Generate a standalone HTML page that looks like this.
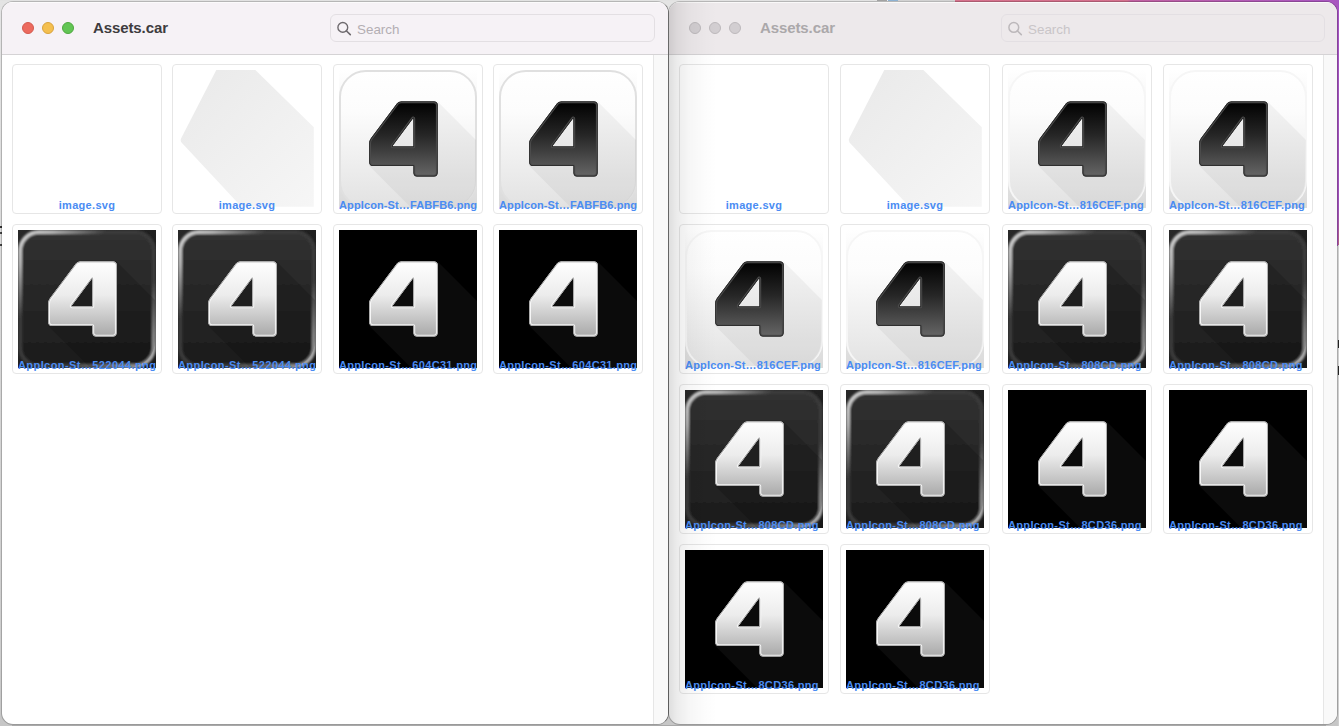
<!DOCTYPE html>
<html><head><meta charset="utf-8">
<style>
*{box-sizing:border-box;margin:0;padding:0}
html,body{width:1339px;height:726px;overflow:hidden;background:linear-gradient(180deg,#e4e4e4 0,#d8d8d8 40%,#cdcdcd 90%,#c6c6c6 100%);font-family:"Liberation Sans",sans-serif}
#topstrip{position:absolute;left:0;top:0;width:1339px;height:1px;background:#e2e2e2}
#bits{position:absolute;left:877px;top:0;width:78px;height:1px;background:linear-gradient(90deg,#a2a2a2 0,#a2a2a2 10px,#eee 10px,#eee 11px,#8db1d2 11px,#8db1d2 21px,#d2d2d2 21px)}
#pink{position:absolute;left:955px;top:0;width:384px;height:246px;background:linear-gradient(90deg,#d6728c 0,#d4708e 172px,#c262a2 176px,#b45cb4 280px,#a856c0 100%)}
#purp{position:absolute;left:1338px;top:0;width:1px;height:245px;background:linear-gradient(180deg,#a454c4,#9c50b8 85%,#b06080)}
.win{position:absolute;top:1px;height:724px;border:1px solid rgba(0,0,0,.2);border-radius:12px;overflow:hidden;background:#fff;background-clip:padding-box}
#w1{left:1px;width:668px;z-index:2;border-right-color:rgba(0,0,0,.42);border-bottom-color:rgba(0,0,0,.22)}
#w2{left:668px;width:670px;z-index:1;border-bottom-color:rgba(0,0,0,.22)}
.shade{position:absolute;left:0;top:0;bottom:0;width:48px;z-index:5;background:linear-gradient(90deg,rgba(0,0,0,.13) 0,rgba(0,0,0,.075) 8px,rgba(0,0,0,.035) 20px,rgba(0,0,0,.01) 36px,rgba(0,0,0,0) 48px)}
.tb{position:absolute;left:0;top:0;right:0;height:53px;border-bottom:1px solid #d5d3d5;box-shadow:inset 0 1px 0 rgba(255,255,255,.7)}
#w1 .tb{background:#f6f2f6}
#w2 .tb{background:#ede9eb}
.light{position:absolute;top:20px;width:12px;height:12px;border-radius:50%}
.title{position:absolute;top:17px;font-weight:bold;font-size:15px;color:#3e3c3e;letter-spacing:-0.1px}
#w2 .title{color:#aba8aa}
.search{position:absolute;top:12px;height:28px;border:1px solid #e3dfe3;border-radius:6px}
.search .ph{position:absolute;left:26px;top:7px;font-size:13.4px;color:#b3aeb3}
.search svg{position:absolute;left:5px;top:5px}
.strip{position:absolute;top:53px;bottom:0;width:15px;background:#f9f9f9;border-left:1px solid #e6e6e6}
.cell{position:absolute;width:150px;height:150px;border:1px solid #e6e6e6;border-radius:4px;background:#fff}
.cell svg{position:absolute;left:5px;top:5px;width:138px;height:138px}
.lbl{position:absolute;left:-20px;right:-20px;top:134px;text-align:center;font-weight:bold;font-size:11px;color:#4a8cf3;white-space:nowrap}
.lbl.a{left:5px;right:auto;text-align:left}
</style></head><body>
<div id="topstrip"></div><div style="position:absolute;left:12px;top:725px;width:1314px;height:1px;background:#a9a9a9"></div><div id="bits"></div><div id="pink"></div><div id="purp"></div>
<div style="position:absolute;left:1338px;top:245px;width:1px;height:481px;background:#cfcfcf"></div>
<div style="position:absolute;left:1338px;top:340px;width:1px;height:8px;background:#222"></div><div style="position:absolute;left:1338px;top:366px;width:1px;height:9px;background:#222"></div>
<div style="position:absolute;left:0;top:226px;width:2px;height:2px;background:#333"></div><div style="position:absolute;left:0;top:232px;width:2px;height:2px;background:#444"></div><div style="position:absolute;left:0;top:244px;width:2px;height:2px;background:#444"></div>
<svg width="0" height="0" style="position:absolute">
<defs>
<linearGradient id="gBlack4" x1="0" y1="0" x2="0" y2="1"><stop offset="0" stop-color="#000"/><stop offset=".45" stop-color="#262626"/><stop offset="1" stop-color="#666"/></linearGradient>
<linearGradient id="gWhite4" x1="0" y1="0" x2="0" y2="1"><stop offset="0" stop-color="#fff"/><stop offset=".45" stop-color="#ececec"/><stop offset="1" stop-color="#a8a8a8"/></linearGradient>
<linearGradient id="gWbg" x1="0" y1="0" x2="0" y2="1"><stop offset="0" stop-color="#ffffff"/><stop offset="1" stop-color="#dadada"/></linearGradient>
<linearGradient id="gWin" x1="0" y1="0" x2="0" y2="1"><stop offset="0" stop-color="#ffffff"/><stop offset=".3" stop-color="#fcfcfc"/><stop offset="1" stop-color="#e2e2e2"/></linearGradient>
<linearGradient id="gDbg" x1="0" y1="0" x2="1" y2="1"><stop offset="0" stop-color="#282828"/><stop offset="1" stop-color="#181818"/></linearGradient>
<linearGradient id="gDin" x1="0" y1="0" x2="0" y2="1"><stop offset="0" stop-color="#313131"/><stop offset="1" stop-color="#1c1c1c"/></linearGradient>
<linearGradient id="gRim" x1="0" y1="0" x2="1" y2="1"><stop offset="0" stop-color="#d4d4d4"/><stop offset=".12" stop-color="#b4b4b4"/><stop offset=".32" stop-color="#3a3a3a"/><stop offset=".68" stop-color="#3a3a3a"/><stop offset=".88" stop-color="#9a9a9a"/><stop offset="1" stop-color="#b0b0b0"/></linearGradient>
<linearGradient id="gHex" x1="0" y1="0" x2="1" y2="1"><stop offset="0" stop-color="#e9e9e9"/><stop offset="1" stop-color="#f6f6f6"/></linearGradient>
<filter id="soft" x="-5%" y="-5%" width="110%" height="110%"><feGaussianBlur stdDeviation=".85"/></filter>
<path id="four" d="M62.3,31.5 L95,31.5 Q98.6,31.5 98.6,35.1 L98.6,102.8 Q98.6,106.4 95,106.4 L78.1,106.4 Q74.5,106.4 74.5,102.8 L74.5,95.9 L34,95.9 Q30.3,95.9 30.3,92.3 L30.3,73.3 Q30.3,70.6 32,68.3 L58,33.5 Q59.7,31.5 62.3,31.5 Z M74.5,49 Q74.5,47.6 73.7,48.7 L53.8,75.4 Q53,76.6 54.4,76.6 L74.5,76.6 Z" fill-rule="evenodd"/>
<clipPath id="c4"><use href="#four" clip-rule="evenodd"/></clipPath>
<path id="shadow" d="M59,31.5 L98.6,31.5 L138,70.9 L138,138 L72.4,138 L30.3,95.9 L30.3,70.5 Z"/>
<clipPath id="rr"><rect x="1" y="1" width="136" height="136" rx="26"/></clipPath>
<g id="blk4">
<use href="#four" fill="url(#gBlack4)"/>
<g clip-path="url(#c4)"><use href="#four" fill="none" stroke="#4e4e4e" stroke-width="3.4" stroke-linejoin="round"/><use href="#four" fill="none" stroke="#262626" stroke-width="1.5" stroke-linejoin="round"/></g>
</g>
<g id="wht4">
<use href="#four" fill="url(#gWhite4)"/>
<g clip-path="url(#c4)"><use href="#four" fill="none" stroke="#fbfbfb" stroke-width="3.4" opacity=".9" stroke-linejoin="round"/><use href="#four" fill="none" stroke="#9a9a9a" stroke-width="1.3" stroke-linejoin="round"/></g>
</g>
<symbol id="iconW" viewBox="0 0 138 138">
<rect width="138" height="138" fill="url(#gWbg)"/>
<rect x="1" y="1" width="136" height="136" rx="26" fill="url(#gWin)" stroke="#e0e0e0" stroke-width="2"/>
<g clip-path="url(#rr)"><use href="#shadow" fill="#000" opacity=".045"/></g>
<use href="#blk4"/>
</symbol>
<symbol id="iconW2" viewBox="0 0 138 138">
<rect width="138" height="138" fill="url(#gWbg)"/>
<rect x="1" y="1" width="136" height="136" rx="26" fill="url(#gWin)" stroke="#f6f6f6" stroke-width="2"/>
<g clip-path="url(#rr)"><use href="#shadow" fill="#000" opacity=".045"/></g>
<use href="#blk4"/>
</symbol>
<symbol id="iconD" viewBox="0 0 138 138">
<rect width="138" height="138" fill="url(#gDbg)"/>
<rect x="2" y="2" width="134" height="134" rx="19" fill="url(#gDin)" stroke="url(#gRim)" stroke-width="4" filter="url(#soft)"/>
<g clip-path="url(#rr)"><use href="#shadow" fill="#000" opacity=".16"/></g>
<use href="#wht4"/>
</symbol>
<symbol id="iconB" viewBox="0 0 138 138">
<rect width="138" height="138" fill="#000"/>
<use href="#shadow" fill="#0b0b0b"/>
<use href="#wht4"/>
</symbol>
<symbol id="iconHex" viewBox="0 0 138 138">
<path d="M38.3,0 L77.4,0 L135.8,57.3 L135.8,136.8 L63.4,136.8 L3.5,72.5 Q2,70.4 3.3,68 Z" fill="url(#gHex)"/>
</symbol>
</defs>
</svg>

<div class="win" id="w1">
 <div class="tb">
  <div class="light" style="left:20px;background:#ec6a5e;border:1px solid #d45a4f"></div>
  <div class="light" style="left:40px;background:#f4bf4f;border:1px solid #d9a33d"></div>
  <div class="light" style="left:60px;background:#62c554;border:1px solid #4fa83f"></div>
  <div class="title" style="left:91px">Assets.car</div>
  <div class="search" style="left:328px;width:325px">
   <svg width="16" height="16" viewBox="0 0 16 16"><circle cx="6.8" cy="7.4" r="4.9" fill="none" stroke="#6e6a6e" stroke-width="1.4"/><path d="M10.5,11 L14.3,14.6" stroke="#6e6a6e" stroke-width="1.6" stroke-linecap="round"/></svg>
   <div class="ph">Search</div>
  </div>
 </div>
 <div class="strip" style="left:651px"></div>
 <div class="cell" style="left:10px;top:62px"><div class="lbl" style="letter-spacing:0.3px">image.svg</div></div>
 <div class="cell" style="left:170px;top:62px"><svg><use href="#iconHex"/></svg><div class="lbl" style="letter-spacing:0.3px">image.svg</div></div>
 <div class="cell" style="left:331px;top:62px"><svg><use href="#iconW"/></svg><div class="lbl a" style="letter-spacing:0.12px">AppIcon-St…FABFB6.png</div></div>
 <div class="cell" style="left:491px;top:62px"><svg><use href="#iconW"/></svg><div class="lbl a" style="letter-spacing:0.12px">AppIcon-St…FABFB6.png</div></div>
 <div class="cell" style="left:10px;top:222px"><svg><use href="#iconD"/></svg><div class="lbl a" style="letter-spacing:0.42px">AppIcon-St…522044.png</div></div>
 <div class="cell" style="left:170px;top:222px"><svg><use href="#iconD"/></svg><div class="lbl a" style="letter-spacing:0.42px">AppIcon-St…522044.png</div></div>
 <div class="cell" style="left:331px;top:222px"><svg><use href="#iconB"/></svg><div class="lbl a" style="letter-spacing:0.33px">AppIcon-St…604C31.png</div></div>
 <div class="cell" style="left:491px;top:222px"><svg><use href="#iconB"/></svg><div class="lbl a" style="letter-spacing:0.33px">AppIcon-St…604C31.png</div></div>
</div>

<div class="win" id="w2">
 <div class="shade"></div>
 <div class="tb">
  <div class="light" style="left:20px;background:#d2ced1;border:1px solid #bdb9bc"></div>
  <div class="light" style="left:40px;background:#d2ced1;border:1px solid #bdb9bc"></div>
  <div class="light" style="left:60px;background:#d2ced1;border:1px solid #bdb9bc"></div>
  <div class="title" style="left:91px">Assets.car</div>
  <div class="search" style="left:332px;width:324px">
   <svg width="16" height="16" viewBox="0 0 16 16"><circle cx="6.8" cy="7.4" r="4.9" fill="none" stroke="#bcb8bb" stroke-width="1.5"/><path d="M10.5,11 L14.3,14.6" stroke="#bcb8bb" stroke-width="1.6" stroke-linecap="round"/></svg>
   <div class="ph" style="color:#c9c5c8">Search</div>
  </div>
 </div>
 <div class="strip" style="left:654px"></div>
 <div class="cell" style="left:10px;top:62px"><div class="lbl" style="letter-spacing:0.3px">image.svg</div></div>
 <div class="cell" style="left:171px;top:62px"><svg><use href="#iconHex"/></svg><div class="lbl" style="letter-spacing:0.3px">image.svg</div></div>
 <div class="cell" style="left:333px;top:62px"><svg><use href="#iconW2"/></svg><div class="lbl a" style="letter-spacing:0.19px">AppIcon-St…816CEF.png</div></div>
 <div class="cell" style="left:494px;top:62px"><svg><use href="#iconW2"/></svg><div class="lbl a" style="letter-spacing:0.19px">AppIcon-St…816CEF.png</div></div>
 <div class="cell" style="left:10px;top:222px"><svg><use href="#iconW2"/></svg><div class="lbl a" style="letter-spacing:0.19px">AppIcon-St…816CEF.png</div></div>
 <div class="cell" style="left:171px;top:222px"><svg><use href="#iconW2"/></svg><div class="lbl a" style="letter-spacing:0.19px">AppIcon-St…816CEF.png</div></div>
 <div class="cell" style="left:333px;top:222px"><svg><use href="#iconD"/></svg><div class="lbl a" style="letter-spacing:0.34px">AppIcon-St…808CD.png</div></div>
 <div class="cell" style="left:494px;top:222px"><svg><use href="#iconD"/></svg><div class="lbl a" style="letter-spacing:0.34px">AppIcon-St…808CD.png</div></div>
 <div class="cell" style="left:10px;top:382px"><svg><use href="#iconD"/></svg><div class="lbl a" style="letter-spacing:0.34px">AppIcon-St…808CD.png</div></div>
 <div class="cell" style="left:171px;top:382px"><svg><use href="#iconD"/></svg><div class="lbl a" style="letter-spacing:0.34px">AppIcon-St…808CD.png</div></div>
 <div class="cell" style="left:333px;top:382px"><svg><use href="#iconB"/></svg><div class="lbl a" style="letter-spacing:0.34px">AppIcon-St…8CD36.png</div></div>
 <div class="cell" style="left:494px;top:382px"><svg><use href="#iconB"/></svg><div class="lbl a" style="letter-spacing:0.34px">AppIcon-St…8CD36.png</div></div>
 <div class="cell" style="left:10px;top:542px"><svg><use href="#iconB"/></svg><div class="lbl a" style="letter-spacing:0.34px">AppIcon-St…8CD36.png</div></div>
 <div class="cell" style="left:171px;top:542px"><svg><use href="#iconB"/></svg><div class="lbl a" style="letter-spacing:0.34px">AppIcon-St…8CD36.png</div></div>
</div>
</body></html>
